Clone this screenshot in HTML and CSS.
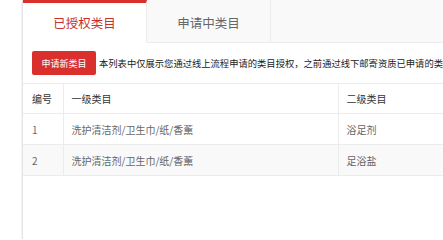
FILE: index.html
```html
<!DOCTYPE html>
<html lang="zh-CN">
<head>
<meta charset="utf-8">
<link rel="stylesheet" href="styles.css">
</head>
<body>
<div class="page">
  <div class="gutter"></div>
  <div class="main">
    <div class="tabs">
      <div class="tab active">已授权类目</div>
      <div class="tab">申请中类目</div>
      <div class="tab-rest"></div>
    </div>
    <div class="toolbar">
      <button class="btn">申请新类目</button>
      <span class="desc">本列表中仅展示您通过线上流程申请的类目授权，之前通过线下邮寄资质已申请的类目请联系客服查询</span>
    </div>
    <table class="grid">
      <thead>
        <tr><th class="c1">编号</th><th class="c2">一级类目</th><th class="c3">二级类目</th></tr>
      </thead>
      <tbody>
        <tr><td class="c1">1</td><td class="c2">洗护清洁剂/卫生巾/纸/香薰</td><td class="c3">浴足剂</td></tr>
        <tr class="alt"><td class="c1">2</td><td class="c2">洗护清洁剂/卫生巾/纸/香薰</td><td class="c3">足浴盐</td></tr>
      </tbody>
    </table>
  </div>
</div>
</body>
</html>
```
FILE: styles.css
```css
html, body {
  margin: 0;
  padding: 0;
  background: #fff;
  font-family: "Noto Sans CJK SC", "Noto Sans", sans-serif;
}
.page {
  display: flex;
  width: 443px;
  height: 239px;
  overflow: hidden;
}
.gutter {
  width: 22px;
  flex: none;
}
.main {
  flex: none;
  width: 700px;
  border-left: 1px solid #e4e4e4;
  box-shadow: -1px 0 1px rgba(0,0,0,0.04);
}
.tabs {
  display: flex;
  height: 43px;
  background: #f9f9f9;
}
.tab {
  width: 124px;
  flex: none;
  display: flex;
  align-items: center;
  justify-content: center;
  font-size: 12.5px;
  color: #666;
  border-bottom: 1px solid #ececec;
  border-right: 1px solid #ececec;
  box-sizing: border-box;
  padding-top: 2px;
}
.tab.active {
  background: #fff;
  color: #c9302c;
  border-top: 3px solid #d9302e;
  border-bottom: 1px solid #fff;
  padding-top: 0;
  padding-bottom: 0;
  border-right: 1px solid #ececec;
}
.tab-rest {
  flex: 1;
  border-bottom: 1px solid #ececec;
}
.toolbar {
  display: flex;
  align-items: center;
  padding: 8px 9px;
  gap: 3px;
  white-space: nowrap;
}
.btn {
  width: 64px;
  height: 24px;
  border: none;
  border-radius: 2px;
  background: #d9302e;
  color: #fff;
  font-family: inherit;
  font-size: 9px;
  padding: 0;
  flex: none;
}
.desc {
  font-size: 9.3px;
  color: #222;
}
.grid {
  border-collapse: collapse;
  width: 640px;
  font-size: 10px;
  table-layout: fixed;
}
.grid th, .grid td {
  height: 31px;
  padding: 0 8px;
  text-align: left;
  border-top: 1px solid #ececec;
  border-bottom: 1px solid #ececec;
  border-right: 1px solid #ececec;
  font-weight: normal;
  box-sizing: border-box;
}
.grid th {
  height: 30px;
  color: #333;
}
.grid td {
  color: #666;
}
.grid .c1 {
  width: 40px;
  padding-left: 9px;
}
.grid .c2 {
  width: 275px;
}
.grid tr.alt td {
  background: #f9f9f9;
}
```
